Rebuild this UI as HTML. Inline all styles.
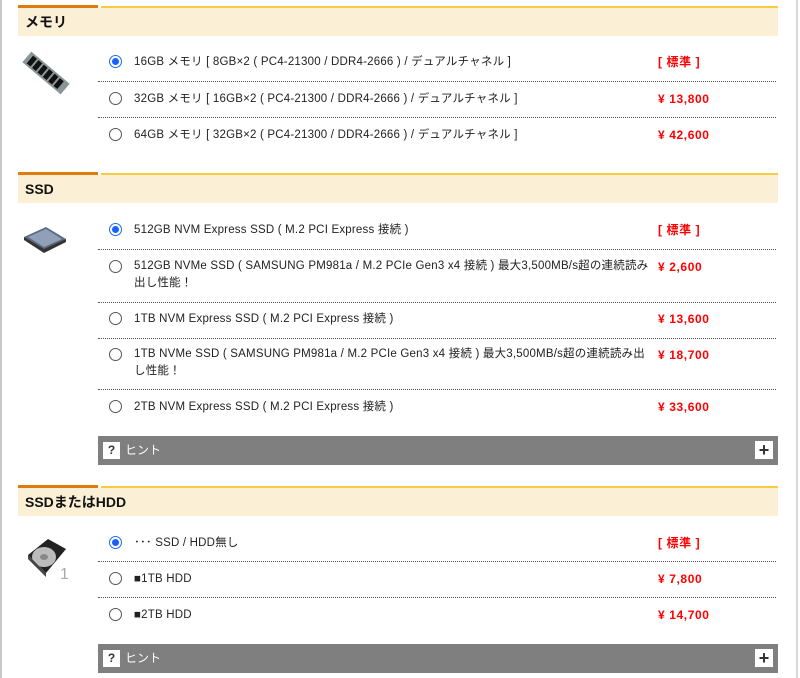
<!DOCTYPE html>
<html><head><meta charset="utf-8"><style>
body{margin:0;width:800px;height:678px;background:#fff;position:relative;overflow:hidden;font-family:"Liberation Sans","Noto Sans CJK JP",sans-serif;}
.a{position:absolute}
.lb{left:0;top:0;width:2px;height:678px;background:#c8c8c8}
.rb{left:796px;top:0;width:2px;height:678px;background:#d8d8d8}
.ho{height:3px;background:#e07b10;width:80px;left:18px}
.hy{height:3px;background:#fcc944;left:101px;width:677px}
.hb{left:18px;width:760px;height:28px;background:#fbf0d6;font-weight:bold;font-size:14px;color:#111;line-height:28px;padding-left:7px;box-sizing:border-box}
.r{left:109px;width:11px;height:11px;border:1px solid #555;border-radius:50%;background:#fff}
.r.on{border-color:#1a6ef5}
.r.on::after{content:"";position:absolute;left:2px;top:2px;width:7px;height:7px;border-radius:50%;background:#1a5fff}
.t{left:134px;font-size:11.5px;color:#222;line-height:17px;width:515px;letter-spacing:0.2px}
.p{left:658px;font-size:12px;color:#f00;font-weight:bold;line-height:17px;letter-spacing:0.6px}
.d{left:98px;width:678px;border-top:1px dotted #555;height:0}
.hint{left:98px;width:680px;height:29px;background:#7f7f7f}
.hint .q{position:absolute;left:5px;top:6px;width:17px;height:17px;background:#fff;font-weight:bold;font-size:12px;text-align:center;line-height:17px;color:#333}
.hint .ht{position:absolute;left:27px;top:6px;color:#fff;font-size:12px;line-height:17px}
.hint .pl{position:absolute;right:5px;top:5px;width:18px;height:18px;background:#fff;font-weight:bold;font-size:18px;text-align:center;line-height:18px;color:#333}
</style></head><body>
<div class="a lb"></div><div class="a rb"></div>

<div class="a ho" style="top:5px"></div><div class="a hy" style="top:6px"></div>
<div class="a hb" style="top:8px">メモリ</div>
<svg class="a" style="left:20px;top:48px" width="52" height="50" viewBox="0 0 52 50"><g transform="rotate(-50 26 25)"><rect x="19" y="0" width="14" height="50" fill="#8a9598"/><g fill="#111"><rect x="21" y="4" width="10" height="5"/><rect x="21" y="11" width="10" height="5"/><rect x="21" y="18" width="10" height="5"/><rect x="21" y="25" width="10" height="5"/><rect x="21" y="32" width="10" height="5"/><rect x="21" y="39" width="10" height="5"/></g></g></svg>
<div class="a r on" style="top:55px"></div><div class="a t" style="top:54px">16GB メモリ [ 8GB×2 ( PC4-21300 / DDR4-2666 ) / デュアルチャネル ]</div><div class="a p" style="top:54px">[ 標準 ]</div>
<div class="a d" style="top:81px"></div>
<div class="a r" style="top:92px"></div><div class="a t" style="top:91px">32GB メモリ [ 16GB×2 ( PC4-21300 / DDR4-2666 ) / デュアルチャネル ]</div><div class="a p" style="top:91px">¥ 13,800</div>
<div class="a d" style="top:117px"></div>
<div class="a r" style="top:128px"></div><div class="a t" style="top:127px">64GB メモリ [ 32GB×2 ( PC4-21300 / DDR4-2666 ) / デュアルチャネル ]</div><div class="a p" style="top:127px">¥ 42,600</div>

<div class="a ho" style="top:172px"></div><div class="a hy" style="top:173px"></div>
<div class="a hb" style="top:175px">SSD</div>
<svg class="a" style="left:22px;top:225px" width="46" height="28" viewBox="0 0 46 28"><path d="M2 12 L24 2 L44 14 L22 26 Z" fill="#5a6a80"/><path d="M2 12 L22 24 L44 14 L44 17 L22 28 L2 15 Z" fill="#333"/><path d="M6 12 L24 4 L40 14 L22 22Z" fill="#8fa0b8"/></svg>
<div class="a r on" style="top:223px"></div><div class="a t" style="top:222px">512GB NVM Express SSD ( M.2 PCI Express 接続 )</div><div class="a p" style="top:222px">[ 標準 ]</div>
<div class="a d" style="top:249px"></div>
<div class="a r" style="top:260px"></div><div class="a t" style="top:258px">512GB NVMe SSD ( SAMSUNG PM981a / M.2 PCIe Gen3 x4 接続 ) 最大3,500MB/s超の連続読み出し性能！</div><div class="a p" style="top:259px">¥ 2,600</div>
<div class="a d" style="top:302px"></div>
<div class="a r" style="top:312px"></div><div class="a t" style="top:311px">1TB NVM Express SSD ( M.2 PCI Express 接続 )</div><div class="a p" style="top:311px">¥ 13,600</div>
<div class="a d" style="top:338px"></div>
<div class="a r" style="top:348px"></div><div class="a t" style="top:346px">1TB NVMe SSD ( SAMSUNG PM981a / M.2 PCIe Gen3 x4 接続 ) 最大3,500MB/s超の連続読み出し性能！</div><div class="a p" style="top:347px">¥ 18,700</div>
<div class="a d" style="top:389px"></div>
<div class="a r" style="top:400px"></div><div class="a t" style="top:399px">2TB NVM Express SSD ( M.2 PCI Express 接続 )</div><div class="a p" style="top:399px">¥ 33,600</div>
<div class="a hint" style="top:436px"><div class="q">?</div><div class="ht">ヒント</div><div class="pl">+</div></div>

<div class="a ho" style="top:485px"></div><div class="a hy" style="top:486px"></div>
<div class="a hb" style="top:488px">SSDまたはHDD</div>
<svg class="a" style="left:24px;top:535px" width="46" height="48" viewBox="0 0 46 48"><path d="M4 20 L24 4 L42 14 L22 38 Z" fill="#222"/><ellipse cx="20" cy="22" rx="12" ry="10" fill="#bbb"/><ellipse cx="20" cy="22" rx="4" ry="3" fill="#888"/><path d="M4 20 L22 38 L22 42 L4 24Z" fill="#444"/><text x="36" y="44" font-size="16" fill="#aaa" font-family="Liberation Sans">1</text></svg>
<div class="a r on" style="top:536px"></div><div class="a t" style="top:535px">･･･ SSD / HDD無し</div><div class="a p" style="top:535px">[ 標準 ]</div>
<div class="a d" style="top:561px"></div>
<div class="a r" style="top:572px"></div><div class="a t" style="top:571px">■1TB HDD</div><div class="a p" style="top:571px">¥ 7,800</div>
<div class="a d" style="top:597px"></div>
<div class="a r" style="top:608px"></div><div class="a t" style="top:607px">■2TB HDD</div><div class="a p" style="top:607px">¥ 14,700</div>
<div class="a hint" style="top:644px"><div class="q">?</div><div class="ht">ヒント</div><div class="pl">+</div></div>
</body></html>
